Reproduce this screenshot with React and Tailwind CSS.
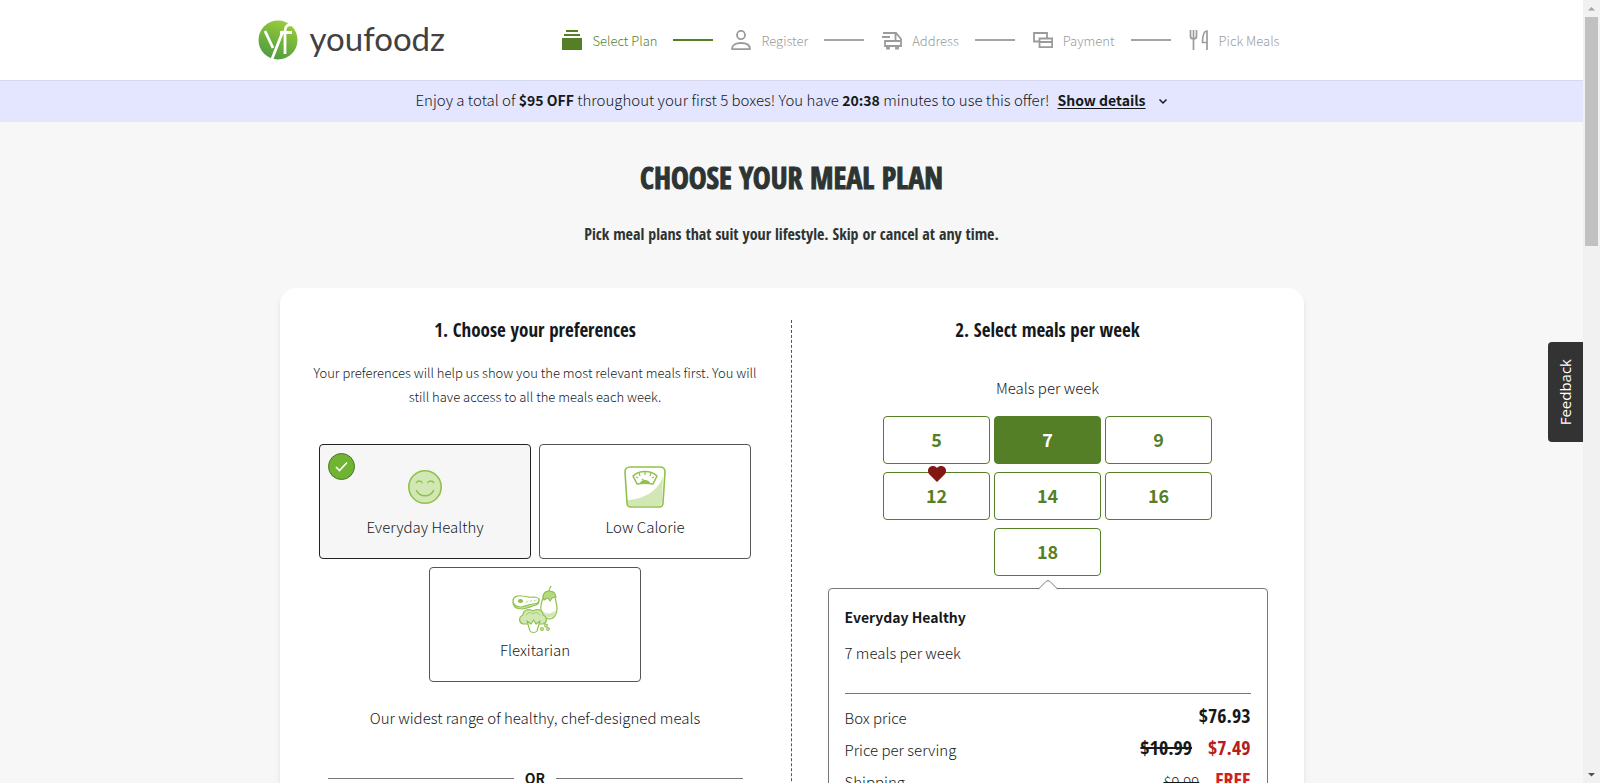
import { useState } from "react"

const steps = [
  { name: "Select Plan", icon: PlanIcon, active: true },
  { name: "Register", icon: PersonIcon },
  { name: "Address", icon: TruckIcon },
  { name: "Payment", icon: CardsIcon },
  { name: "Pick Meals", icon: CutleryIcon },
]

const preferences = [
  { name: "Everyday Healthy", icon: SmileIcon },
  { name: "Low Calorie", icon: ScaleIcon },
  { name: "Flexitarian", icon: FlexIcon },
]

const mealCounts = [5, 7, 9, 12, 14, 16, 18]

const headingFont = "font-['Open_Sans_Condensed','Roboto_Condensed','Liberation_Sans_Narrow','Open_Sans',sans-serif] font-extrabold"

function PlanIcon() {
  return (
    <svg width="20" height="20" viewBox="0 0 20 20" fill="currentColor" aria-hidden="true">
      <path d="M4 0h12v2H4zM2 4h16v2H2zM0 8h20v12H0z" />
    </svg>
  )
}

function PersonIcon() {
  return (
    <svg width="20" height="20" viewBox="0 0 20 20" fill="none" stroke="currentColor" strokeWidth="1.8" aria-hidden="true">
      <ellipse cx="10" cy="5" rx="4" ry="4.2" />
      <path d="M1 19.100h18c0-4-3.600-6.100-9-6.100s-9 2.100-9 6.100z" strokeLinejoin="round" />
    </svg>
  )
}

function TruckIcon() {
  return (
    <svg width="20" height="20" viewBox="0 0 20 20" fill="none" stroke="currentColor" strokeWidth="1.8" aria-hidden="true">
      <path d="M1 3h13l5 6v7H3v-5h16M13.500 3v8M0 7h8" />
      <path d="M5 16v2.500h2V16M14 16v2.500h2V16" />
    </svg>
  )
}

function CardsIcon() {
  return (
    <svg width="20" height="20" viewBox="0 0 20 20" fill="none" stroke="currentColor" strokeWidth="1.8" aria-hidden="true">
      <path d="M6 11.500H1V3h13v5M6.500 8.500h12.600v8.600H6.500zM6.500 12h12.600" />
    </svg>
  )
}

function CutleryIcon() {
  return (
    <svg width="20" height="20" viewBox="0 0 20 20" fill="none" stroke="currentColor" strokeWidth="1.7" aria-hidden="true">
      <path d="M1.500 0v6c0 2 1 3 3 3s3-1 3-3V0M4.500 0v20M18 20V1c-3 0-4.500 4-4.500 11.500H18" />
    </svg>
  )
}

function SmileIcon() {
  return (
    <svg width="36" height="36" viewBox="0 0 36 36" fill="none" stroke="#90c14c" strokeWidth="1.6" strokeLinecap="round" aria-hidden="true">
      <circle cx="18" cy="18" r="16.200" fill="#d2e8b4" />
      <path d="M9.500 13.500c1-2 4.500-2 5.500 0M21 13.500c1-2 4.500-2 5.500 0M9.500 21.500c3 7 14 7 17 0" />
    </svg>
  )
}

function ScaleIcon() {
  return (
    <svg width="42" height="42" viewBox="0 0 42 42" fill="none" stroke="#90c14c" strokeWidth="1.6" strokeLinejoin="round" aria-hidden="true">
      <path d="M3 34c15 0 32-9 36-24l-1 25c0 4-1 5-4 5H8c-4 0-5-2-5-6z" fill="#d2e8b4" stroke="none" />
      <path d="M6 1h30c4 0 5 2 5 5l-2 31c0 3-2 4-4 4H7c-3 0-4-2-4-4L1 6c0-3 2-5 5-5z" />
      <path d="M9 10c6-6 18-6 24 0l-4 8c-5-1-11-1-16 0z" fill="#fff" />
      <path d="M15 7l1 3M21 5v4M27 7l-1 3M12 11l2 1M30 11l-2 1M18 13l4 3" strokeWidth="1.2" />
      <path d="M17 17c1-3 7-3 8 0z" fill="#90c14c" />
    </svg>
  )
}

function FlexIcon() {
  return (
    <svg width="46" height="48" viewBox="0 0 46 48" fill="none" stroke="#90c14c" strokeWidth="1.2" strokeLinejoin="round" strokeLinecap="round" aria-hidden="true">
      <path d="M1 16c0 6 4 7 9 7s9-3 14-4c3-1 3-3 3-6" fill="#d2e8b4" />
      <path d="M1 15c0-4 4-6 9-5 5 0 7 2 11 1 4 0 6 1 6 3s-2 4-6 4c-5 0-8 3-12 3S1 19 1 15z" fill="#fff" />
      <ellipse cx="8.500" cy="15" rx="2" ry="1.300" fill="#90c14c" />
      <path d="M14 17l2-2M18 16l2-2M22 15l2-1" strokeWidth="0.6" />
      <path d="M32 9c-2 5-4 11-3 16 1 4 4 8 8 8 5 0 8-5 8-10 0-6-2-9-2-14-1-5-10-5-11 0z" fill="#fff" />
      <path d="M29.500 24c3 4 9 5 15 0-1 5-4 8-8 8s-6-4-7-8z" fill="#d2e8b4" stroke="none" />
      <path d="M31 10c1-4 4-5 6-5s6 1 7 6l-4 1-2 3-2-3-4 2z" fill="#b5d97e" />
      <path d="M37 5c0-2 1-3 2-5" />
      <path d="M11 38c-4-1-5-7 0-9 0-5 6-7 10-4 4-3 10-1 10 4 5 2 4 8 0 9z" fill="#d2e8b4" />
      <path d="M14 29c2-3 5-3 7-1 2-2 5-2 7 1" strokeWidth="0.8" />
      <path d="M15 35l3 10c1.500 2 5.500 2 7 0l3-10-4 3-2.500-4-2.500 4z" fill="#fff" />
      <circle cx="30" cy="43" r="1.300" />
      <circle cx="34" cy="39.500" r="1.300" />
      <circle cx="36" cy="43" r="1.300" />
    </svg>
  )
}

function Logo() {
  return (
    <a href="#home" className="flex items-center gap-3" aria-label="youfoodz">
      <svg width="40" height="40" viewBox="0 0 40 40" aria-hidden="true">
        <defs>
          <linearGradient id="leaf" x1="0.7" y1="0" x2="0.3" y2="1">
            <stop offset="0" stopColor="#9ccc3c" />
            <stop offset="1" stopColor="#4c9a3f" />
          </linearGradient>
        </defs>
        <circle cx="20" cy="20" r="19.500" fill="url(#leaf)" />
        <path d="M7 11l8 17M25 11L14 39" fill="none" stroke="#fff" strokeWidth="2.8" />
        <path d="M27 34V11c0-5 3-7 7-6M22 12.500h12" fill="none" stroke="#fff" strokeWidth="2.8" />
      </svg>
      <span className="pb-1 font-['Lato',sans-serif] text-[33px] leading-10 text-[#414042]">youfoodz</span>
    </a>
  )
}

function Header() {
  return (
    <header className="bg-white">
      <div className="mx-auto flex h-20 max-w-[1068px] items-center justify-between pr-[46px]">
        <Logo />
        <ol className="flex items-center text-[13px] leading-5">
          {steps.map((step, i) => (
            <li key={step.name} className={step.active ? "flex items-center text-[#557f27]" : "flex items-center text-[#9b9b9b]"}>
              <step.icon />
              <span className="ml-[10px] pt-[2px] font-light">{step.name}</span>
              {i < steps.length - 1 && (
                <span className={step.active ? "mr-[18px] ml-4 h-[2px] w-10 bg-[#557f27]" : "mr-[18px] ml-4 h-[2px] w-10 bg-[#a3a3a3]"} />
              )}
            </li>
          ))}
        </ol>
      </div>
    </header>
  )
}

function OfferBar() {
  return (
    <div className="flex h-[42px] items-center justify-center border-t border-[#d6d8f0] bg-[#e4e6ff] pb-[2px] font-light">
      <p>
        Enjoy a total of <b className="text-[14px] font-bold">$95 OFF</b> throughout your first 5 boxes! You have{" "}
        <b className="text-[14px] font-bold">20:38</b> minutes to use this offer!
      </p>
      <button className="ml-2 flex items-center gap-3 text-[14px] font-bold">
        <span className="underline underline-offset-2">Show details</span>
        <svg width="10" height="10" viewBox="0 0 10 10" fill="none" stroke="currentColor" strokeWidth="1.5" aria-hidden="true">
          <path d="M1.500 3.500L5 7l3.500-3.500" />
        </svg>
      </button>
    </div>
  )
}

function Preferences() {
  const [selected, setSelected] = useState("Everyday Healthy")

  return (
    <section className="border-r border-dashed border-[#555] px-7 pb-8 text-center">
      <h2 className={`${headingFont} text-[19px] leading-5`}>1. Choose your preferences</h2>
      <p className="mt-[21px] text-[13px] leading-6 font-light">
        Your preferences will help us show you the most relevant meals first. You will still have access to all the meals each week.
      </p>

      <div className="mt-[35px] flex flex-wrap justify-center gap-2">
        {preferences.map((pref) => (
          <button
            key={pref.name}
            aria-pressed={selected === pref.name}
            onClick={() => setSelected(pref.name)}
            className={`relative flex h-[115px] w-[212px] flex-col items-center rounded-sm border pt-4
            ${selected === pref.name ? "border-[#222] bg-[#f6f6f6]" : "border-[#555] bg-white"}`}
          >
            {selected === pref.name && (
              <span className="absolute top-2 left-2 flex size-[27px] items-center justify-center rounded-full border border-[#4a7326] bg-[#70b532]">
                <svg width="13" height="11" viewBox="0 0 13 11" fill="none" stroke="#fff" strokeWidth="1.6" aria-hidden="true">
                  <path d="M1 6l3.500 3.500L12 1.500" />
                </svg>
              </span>
            )}
            <span className="flex h-[52px] items-center">
              <pref.icon />
            </span>
            <span className="mt-[2px] leading-6 font-light">{pref.name}</span>
          </button>
        ))}
      </div>

      <p className="mt-6 leading-6 font-light">Our widest range of healthy, chef-designed meals</p>

      <div className="mx-5 mt-9 flex items-center gap-[11px] text-[14px] leading-6 font-bold">
        <hr className="flex-1 border-[#777]" />
        OR
        <hr className="flex-1 border-[#777]" />
      </div>
    </section>
  )
}

function MealSize() {
  const [count, setCount] = useState(7)

  return (
    <section className="px-9 text-center">
      <h2 className={`${headingFont} text-[19px] leading-5`}>2. Select meals per week</h2>
      <p className="mt-9 leading-6 font-light">Meals per week</p>

      <div className="mx-auto mt-4 flex max-w-[336px] flex-wrap justify-center gap-x-1 gap-y-2">
        {mealCounts.map((n) => (
          <button
            key={n}
            aria-pressed={count === n}
            onClick={() => setCount(n)}
            className={`relative h-12 w-[107px] rounded-sm border border-[#557f27] pb-[2px] text-lg font-bold
            ${count === n ? "bg-[#557f27] text-white" : "bg-white text-[#557f27]"}`}
          >
            {n === 12 && (
              <svg className="absolute -top-[7px] left-1/2 -translate-x-1/2" width="18" height="16" viewBox="0 0 18 16" fill="#851712" aria-hidden="true">
                <path d="M9 16L1.500 8.500C-.5 6.500-.5 3 1.500 1.200 3.600-.6 7-.4 9 2c2-2.400 5.400-2.600 7.500-.8 2 1.800 2 5.300 0 7.300z" />
              </svg>
            )}
            {n}
          </button>
        ))}
      </div>

      <div className="relative mt-3 rounded-sm border border-[#777] px-4 pt-4 pb-8 text-left">
        <svg className="absolute -top-[9px] left-1/2 -translate-x-1/2" width="20" height="10" viewBox="0 0 20 10" aria-hidden="true">
          <path d="M0 9.500l8-8c1.200-1 2.800-1 4 0l8 8" fill="#fff" stroke="#777" />
        </svg>
        <p className="text-[14px] leading-6 font-bold">Everyday Healthy</p>
        <p className="mt-3 leading-6 font-light">{count} meals per week</p>
        <hr className="mt-7 border-[#777]" />
        <dl className="mt-2 font-light">
          <div className="flex h-8 items-center justify-between">
            <dt>Box price</dt>
            <dd className={`${headingFont} pb-1 text-[20px]`}>$76.93</dd>
          </div>
          <div className="flex h-8 items-center justify-between">
            <dt>Price per serving</dt>
            <dd className={`${headingFont} flex gap-4 pb-1 text-[20px]`}>
              <s>$10.99</s>
              <span className="text-[#b5201f]">$7.49</span>
            </dd>
          </div>
          <div className="flex h-8 items-center justify-between">
            <dt>Shipping</dt>
            <dd className="flex items-center gap-4">
              <s>$9.99</s>
              <span className={`${headingFont} pb-1 text-[20px] text-[#d0201f]`}>FREE</span>
            </dd>
          </div>
        </dl>
      </div>
    </section>
  )
}

function ScrollTrack() {
  return (
    <div className="flex w-[17px] flex-col items-center bg-[#f1f1f1]" aria-hidden="true">
      <svg width="17" height="17" viewBox="0 0 17 17" fill="#a3a3a3">
        <path d="M5 10.500h7L8.500 7z" />
      </svg>
      <div className="h-[229px] w-[13px] bg-[#c1c1c1]" />
      <svg className="mt-auto" width="17" height="17" viewBox="0 0 17 17" fill="#505050">
        <path d="M5 7h7l-3.500 3.500z" />
      </svg>
    </div>
  )
}

function App() {
  return (
    <div className="flex h-screen overflow-hidden font-['Noto_Sans_CJK_SC',sans-serif] text-[15px] text-[#15191b]">
      <div className="relative flex-1 overflow-hidden bg-[#f7f7f7]">
        <Header />
        <OfferBar />
        <main className="mx-auto max-w-[1024px]">
          <h1 className={`${headingFont} pt-[38px] text-center text-[30px] leading-9 text-[#2d3433] [-webkit-text-stroke:1px]`}>
            CHOOSE YOUR MEAL PLAN
          </h1>
          <p className={`${headingFont} mt-[26px] text-center text-[16px] leading-6 text-[#2d3433]`}>
            Pick meal plans that suit your lifestyle. Skip or cancel at any time.
          </p>
          <div className="mt-[42px] grid grid-cols-2 rounded-2xl bg-white pt-8 shadow-md">
            <Preferences />
            <MealSize />
          </div>
        </main>
        <button className="absolute top-[342px] right-0 flex h-[100px] w-[35px] items-center justify-center rounded-l-sm bg-[#333] font-['Open_Sans',sans-serif] text-[15px] text-white">
          <span className="rotate-180 [writing-mode:vertical-rl]">Feedback</span>
        </button>
      </div>
      <ScrollTrack />
    </div>
  )
}

export default App
